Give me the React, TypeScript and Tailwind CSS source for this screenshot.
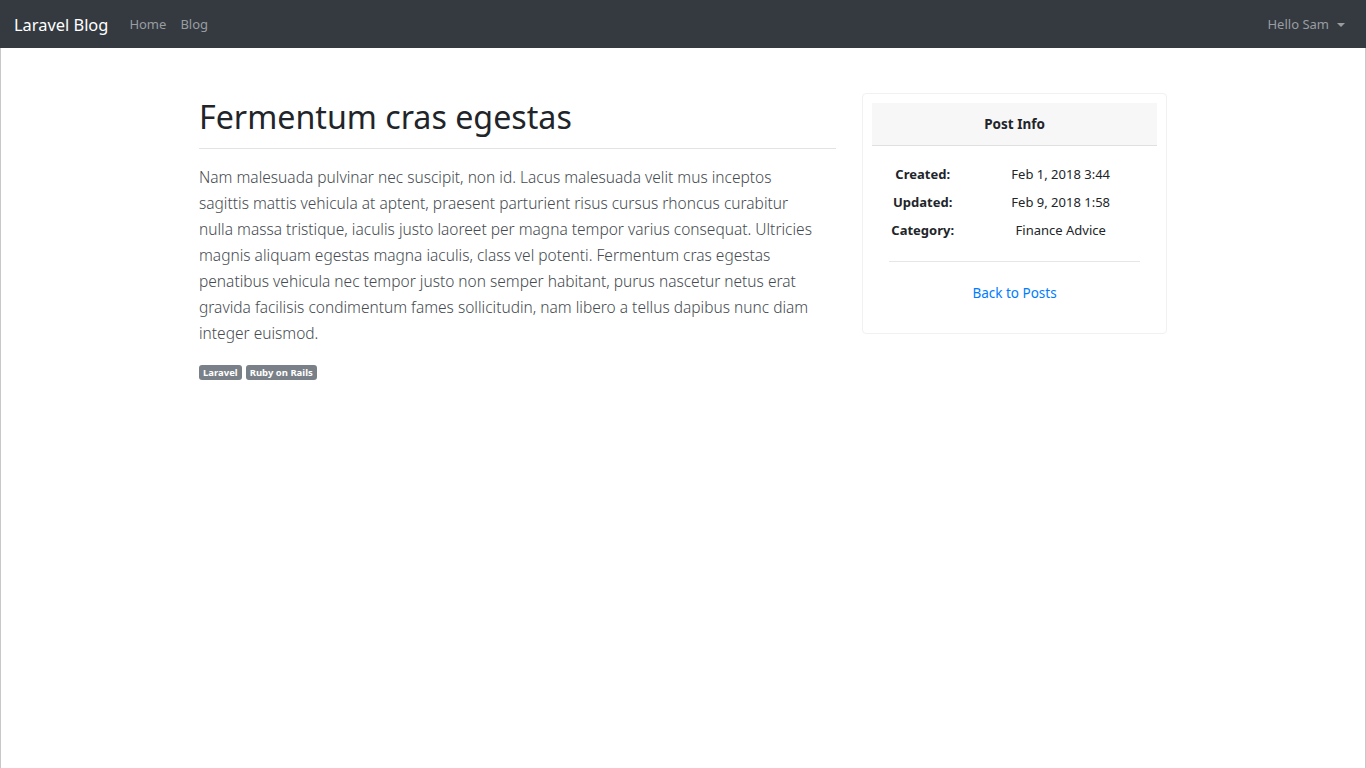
import React from "react";

const tags = ["Laravel", "Ruby on Rails"];

const info = [
  { label: "Created:", value: "Feb 1, 2018 3:44" },
  { label: "Updated:", value: "Feb 9, 2018 1:58" },
  { label: "Category:", value: "Finance Advice" },
];

function Navbar() {
  return (
    <nav className="h-12 bg-[#343a40] flex items-center justify-between pl-[14px] pr-[21px] pt-[2px]">
      <div className="flex items-center">
        <span className="text-white text-[16.4px] mr-[21px] leading-none">Laravel Blog</span>
        <a className="text-[13px] text-[#9a9da0] mr-[14px]">Home</a>
        <a className="text-[13px] text-[#9a9da0]">Blog</a>
      </div>
      <div className="flex items-center text-[13px] text-[#9a9da0]">
        Hello Sam
        <span className="ml-[8px] w-0 h-0 border-x-[4px] border-x-transparent border-t-[4px] border-t-[#9a9da0]" />
      </div>
    </nav>
  );
}

function PostInfo() {
  return (
    <div className="w-[305px] shrink-0 border border-[#f1f1f1] rounded p-[9px] pb-[29px] mt-[45px] self-start">
      <div className="h-[43px] bg-[#f7f7f7] border-b border-[#e0e0e0] flex items-center justify-center text-[13.5px] font-bold text-[#212529]">
        Post Info
      </div>
      <div className="px-[17px] pt-[19px]">
        <div className="flex flex-col gap-[9px] text-[13px] text-[#212529]">
          {info.map((row) => (
            <div key={row.label} className="flex leading-[19px]">
              <span className="w-[68px] text-center font-bold">{row.label}</span>
              <span className="w-[160px] ml-[25px] text-center">{row.value}</span>
            </div>
          ))}
        </div>
        <div className="border-t border-[#e6e6e6] mt-[21px] pt-[18px] text-center">
          <a className="text-[13.5px] text-[#007bff]">Back to Posts</a>
        </div>
      </div>
    </div>
  );
}

export default function App() {
  return (
    <div className="min-h-[768px] bg-white flex flex-col" style={{ fontFamily: '"Segoe UI", "Noto Sans", sans-serif' }}>
      <Navbar />
      <main className="flex-1 border-x border-[#c8c8c8]">
        <div className="w-[968px] mx-auto flex gap-[26px]">
          <article className="w-[637px] shrink-0 pt-[47px]">
            <h1 className="text-[32.2px] leading-[44px] text-[#212529] pb-[9px] border-b border-[#e3e3e3]">
              Fermentum cras egestas
            </h1>
            <p className="mt-[15px] w-[615px] text-[15.5px] leading-[26px] font-light text-[#464b51]">
              Nam malesuada pulvinar nec suscipit, non id. Lacus malesuada velit mus inceptos sagittis mattis vehicula at aptent, praesent parturient risus cursus rhoncus curabitur nulla massa tristique, iaculis justo laoreet per magna tempor varius consequat. Ultricies magnis aliquam egestas magna iaculis, class vel potenti. Fermentum cras egestas penatibus vehicula nec tempor justo non semper habitant, purus nascetur netus erat gravida facilisis condimentum fames sollicitudin, nam libero a tellus dapibus nunc diam integer euismod.
            </p>
            <div className="mt-[19px] flex gap-[4px]">
              {tags.map((t) => (
                <span key={t} className="bg-[#7a8088] text-white text-[9.5px] font-bold leading-none px-[4px] py-[2.5px] rounded-[3px]">
                  {t}
                </span>
              ))}
            </div>
          </article>
          <PostInfo />
        </div>
      </main>
    </div>
  );
}
